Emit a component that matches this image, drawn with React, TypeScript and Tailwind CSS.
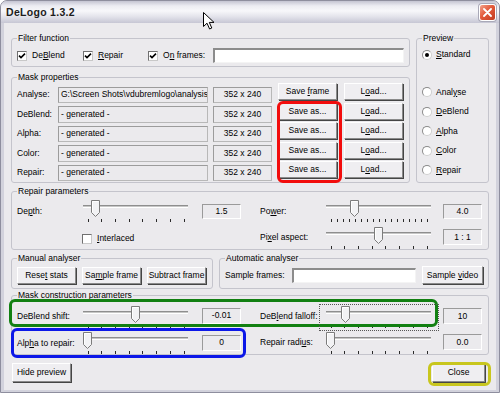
import React from 'react';

type Box = { children?: React.ReactNode; className?: string };

const U = ({ children }: { children: React.ReactNode }) => <span className="underline">{children}</span>;

function GroupBox({ title, className = '', children }: Box & { title: string }) {
  return (
    <fieldset className={['border border-[#c4c4cc] rounded-[3px] px-[5px] min-w-0 shrink-0', className].join(' ')}>
      <legend className="px-[1px] leading-[11px]">{title}</legend>
      {children}
    </fieldset>
  );
}

function CheckBox({ checked }: { checked?: boolean }) {
  return (
    <span className="w-[10px] h-[10px] shrink-0 bg-white border border-t-[#707070] border-l-[#707070] border-r-[#c8c8c8] border-b-[#c8c8c8] flex items-center justify-center">
      {checked && (
        <svg width="8" height="8" viewBox="0 0 8 8">
          <path d="M1 3.6 L3 5.6 L7 1.6" stroke="#000" strokeWidth="1.6" fill="none" />
        </svg>
      )}
    </span>
  );
}

function Radio({ checked }: { checked?: boolean }) {
  return (
    <span className="w-[10px] h-[10px] shrink-0 rounded-full bg-white border border-[#8a8a8a] border-r-[#cfcfcf] border-b-[#cfcfcf] flex items-center justify-center">
      {checked && <span className="w-[4px] h-[4px] rounded-full bg-black" />}
    </span>
  );
}

function Btn({ children, className = '' }: Box) {
  return (
    <button
      type="button"
      className={[
        'shrink-0 flex items-center justify-center bg-[#efeef1] border border-t-white border-l-white',
        'border-r-[#8a8a8a] border-b-[#8a8a8a] shadow-[1px_1px_0_#454545] leading-[11px]',
        className,
      ].join(' ')}
    >
      {children}
    </button>
  );
}

function ValueBox({ children, className = '' }: Box) {
  return (
    <div
      className={[
        'shrink-0 flex items-center justify-center border border-t-[#9a9a9a] border-l-[#9a9a9a] border-r-white border-b-white',
        className,
      ].join(' ')}
    >
      {children}
    </div>
  );
}

function Sunken({ className = '' }: Box) {
  return (
    <div
      className={[
        'shrink-0 bg-white border-t-2 border-l-2 border-r border-b border-t-[#8c8c8c] border-l-[#8c8c8c] border-r-[#f4f4f4] border-b-[#f4f4f4]',
        className,
      ].join(' ')}
    />
  );
}

function Slider({ width, x0, x1, pos, ticks }: { width: number; x0: number; x1: number; pos: number; ticks: number }) {
  const a = x0 + 4.5;
  const b = x1 - 4.5;
  const cx = a + pos * (b - a);
  const xs = Array.from({ length: ticks }, (_, i) => Math.round(a + (i * (b - a)) / (ticks - 1)) + 0.5);
  const l = Math.round(cx - 4.5);
  return (
    <svg width={width} height={23} className="shrink-0 block">
      <line x1={x0} x2={x1} y1={5.5} y2={5.5} stroke="#8e8e8e" />
      <line x1={x0} x2={x1} y1={6.5} y2={6.5} stroke="#c6c6c6" />
      <line x1={x0} x2={x1} y1={7.5} y2={7.5} stroke="#ffffff" />
      {xs.map((x, i) => (
        <line key={i} x1={x} x2={x} y1={19} y2={22} stroke="#2a2a2a" />
      ))}
      <path d={`M${l + 0.5} 12.5 V0.5 H${l + 8.5} V12.5 L${l + 4.5} 16.5 Z`} fill="#f2f2f4" stroke="#7c7c7c" />
      <path d={`M${l + 1.5} 12.2 V1.5 H${l + 7.5}`} stroke="#ffffff" fill="none" />
    </svg>
  );
}

const maskRows = [
  { label: 'Analyse:', path: 'G:\\Screen Shots\\vdubremlogo\\analysis', frame: true },
  { label: 'DeBlend:', path: '- generated -' },
  { label: 'Alpha:', path: '- generated -' },
  { label: 'Color:', path: '- generated -' },
  { label: 'Repair:', path: '- generated -' },
];

const previewRows: [string, string][] = [
  ['Anal', 'y', 'se'],
  ['', 'D', 'eBlend'],
  ['', 'A', 'lpha'],
  ['', 'C', 'olor'],
  ['', 'R', 'epair'],
] as unknown as [string, string][];

const greyBox = 'shrink-0 border border-[#b8b8b8] border-t-[#9c9c9c] border-l-[#9c9c9c] flex items-center overflow-hidden whitespace-nowrap';

export default function App() {
  return (
    <div className="relative w-[500px] h-[393px] flex flex-col overflow-hidden bg-[#d2d2dc] border border-[#8e8e9e] rounded-t-[7px] font-['Liberation_Sans',Arial,sans-serif] text-[8.5px] leading-[11px] text-black">
      {/* title bar */}
      <div className="h-[22px] shrink-0 flex items-center justify-between pl-[5px] pr-[3px] bg-[linear-gradient(to_bottom,#c4c4d2_0%,#ececf2_22%,#f7f7fa_45%,#e2e2ea_72%,#c6c6d4_100%)]">
        <span className="font-bold text-[10.5px] text-[#1c1c1c] tracking-[0.3px]">DeLogo 1.3.2</span>
        <div className="w-[17px] h-[17px] rounded-[3px] border border-white bg-[linear-gradient(135deg,#f3a28b_0%,#e35a3b_45%,#c23c21_100%)] shadow-[0_0_0_1px_#a9a9b8] flex items-center justify-center">
          <svg width="9" height="9" viewBox="0 0 9 9">
            <path d="M1 1 L8 8 M8 1 L1 8" stroke="#fff" strokeWidth="1.8" strokeLinecap="round" />
          </svg>
        </div>
      </div>

      {/* dialog body */}
      <div className="flex-1 mx-[3px] mb-[2px] bg-[#ebeaed] pt-[10px] px-[7px] pb-[8px] flex flex-col">
        <div className="flex gap-[6px] h-[150px] shrink-0">
          <div className="w-[399px] flex flex-col gap-[5px]">
            <GroupBox title="Filter function" className="h-[34px]">
              <div className="mt-[4px] h-[15px] flex items-center">
                <div className="w-[66px] flex items-center gap-[5px]">
                  <CheckBox checked />
                  <span>
                    De<U>B</U>lend
                  </span>
                </div>
                <div className="w-[65px] flex items-center gap-[5px]">
                  <CheckBox checked />
                  <span>
                    <U>R</U>epair
                  </span>
                </div>
                <div className="w-[65px] flex items-center gap-[5px]">
                  <CheckBox checked />
                  <span>
                    O<U>n</U> frames:
                  </span>
                </div>
                <Sunken className="w-[191px] h-[15px]" />
              </div>
            </GroupBox>

            <GroupBox title="Mask properties" className="h-[111px]">
              {maskRows.map((r) => (
                <div key={r.label} className="h-[19.5px] flex items-start">
                  <span className="w-[41px] shrink-0 mt-[3.5px] h-[16.5px] flex items-center">{r.label}</span>
                  <div className={`${greyBox} mt-[3.5px] w-[150px] h-[16.5px] pl-[2px]`}>{r.path}</div>
                  <div className={`${greyBox} mt-[3.5px] ml-[5px] w-[59px] h-[16.5px] justify-center`}>352 x 240</div>
                  <Btn className="ml-[6px] w-[59px] h-[17px]">
                    {r.frame ? (
                      <span>
                        Save <U>f</U>rame
                      </span>
                    ) : (
                      'Save as...'
                    )}
                  </Btn>
                  <Btn className="ml-[7px] w-[59px] h-[17px]">
                    <span>
                      L<U>o</U>ad...
                    </span>
                  </Btn>
                </div>
              ))}
            </GroupBox>
          </div>

          <GroupBox title="Preview" className="w-[73px] h-[150px]">
            <div className="mt-[1px] h-[19.5px] flex items-center gap-[4px]">
              <Radio checked />
              <span>
                <U>S</U>tandard
              </span>
            </div>
            <div className="mt-[18px] flex flex-col">
              {(previewRows as unknown as string[][]).map(([pre, key, post]) => (
                <div key={key} className="h-[19.5px] flex items-center gap-[4px]">
                  <Radio />
                  <span>
                    {pre}
                    <U>{key}</U>
                    {post}
                  </span>
                </div>
              ))}
            </div>
          </GroupBox>
        </div>

        <GroupBox title="Repair parameters" className="mt-[3px] h-[64px]">
          <div className="pt-[3px]">
            <div className="h-[27px] flex items-start">
              <span className="w-[65px] shrink-0 mt-[6px]">
                De<U>p</U>th:
              </span>
              <Slider width={112} x0={1} x1={106} pos={0.08} ticks={8} />
              <ValueBox className="ml-[8px] mt-[4px] w-[39px] h-[15px]">1.5</ValueBox>
              <span className="ml-[19px] w-[62px] shrink-0 mt-[6px]">
                Po<U>w</U>er:
              </span>
              <Slider width={114} x0={4} x1={109} pos={0.25} ticks={17} />
              <ValueBox className="ml-[7px] mt-[4px] w-[39px] h-[15px]">4.0</ValueBox>
            </div>
            <div className="flex items-start">
              <div className="w-[65px] shrink-0" />
              <div className="w-[112px] shrink-0 mt-[6px] flex items-center gap-[5px]">
                <CheckBox />
                <span>
                  <U>I</U>nterlaced
                </span>
              </div>
              <div className="ml-[8px] w-[39px] shrink-0" />
              <span className="ml-[19px] w-[62px] shrink-0 mt-[5px]">
                Pi<U>x</U>el aspect:
              </span>
              <Slider width={114} x0={4} x1={109} pos={0.5} ticks={8} />
              <ValueBox className="ml-[7px] mt-[2px] w-[39px] h-[16px]">1 : 1</ValueBox>
            </div>
          </div>
        </GroupBox>

        <div className="mt-[3px] flex gap-[6px] h-[36px] shrink-0">
          <GroupBox title="Manual analyser" className="w-[202px] h-[36px]">
            <div className="pt-[2.5px] flex gap-[6px]">
              <Btn className="w-[59px] h-[17px]">
                <span>
                  Rese<U>t</U> stats
                </span>
              </Btn>
              <Btn className="w-[59px] h-[17px]">
                <span>
                  Sa<U>m</U>ple frame
                </span>
              </Btn>
              <Btn className="w-[59px] h-[17px]">Subtract frame</Btn>
            </div>
          </GroupBox>
          <GroupBox title="Automatic analyser" className="flex-1 h-[36px]">
            <div className="pt-[2px] h-[20px] flex items-center">
              <span className="w-[67px] shrink-0">Sample frames:</span>
              <Sunken className="w-[124px] h-[15px]" />
              <Btn className="ml-[6px] w-[61px] h-[17.5px]">
                <span>
                  Sample <U>v</U>ideo
                </span>
              </Btn>
            </div>
          </GroupBox>
        </div>

        <GroupBox title="Mask construction parameters" className="mt-[1px] h-[65px]">
          <div className="pt-[5px]">
            <div className="h-[26px] flex items-start">
              <span className="w-[65px] shrink-0 mt-[5px]">DeBlend shift:</span>
              <Slider width={112} x0={1} x1={106} pos={0.5} ticks={8} />
              <ValueBox className="ml-[8px] mt-[2px] w-[39px] h-[15.5px]">-0.01</ValueBox>
              <span className="ml-[19px] w-[62px] shrink-0 mt-[5px]">
                DeB<U>l</U>end falloff:
              </span>
              <Slider width={114} x0={4} x1={109} pos={0.16} ticks={8} />
              <ValueBox className="ml-[7px] mt-[2px] w-[39px] h-[16px]">10</ValueBox>
            </div>
            <div className="flex items-start">
              <span className="w-[65px] shrink-0 mt-[6px]">
                Alp<U>h</U>a to repair:
              </span>
              <Slider width={112} x0={1} x1={106} pos={0} ticks={8} />
              <ValueBox className="ml-[8px] mt-[3px] w-[39px] h-[15.5px]">0</ValueBox>
              <span className="ml-[19px] w-[62px] shrink-0 mt-[5px]">
                Repair radi<U>u</U>s:
              </span>
              <Slider width={114} x0={4} x1={109} pos={0} ticks={8} />
              <ValueBox className="ml-[7px] mt-[2px] w-[39px] h-[16px]">0.0</ValueBox>
            </div>
          </div>
        </GroupBox>

        <div className="mt-[8px] h-[19px] shrink-0 flex justify-between">
          <Btn className="ml-[1px] w-[59px] h-[19px]">Hide preview</Btn>
          <Btn className="mr-[4px] w-[53px] h-[19px]">Close</Btn>
        </div>
      </div>

      {/* annotation marks drawn over the dialog */}
      <div className="absolute left-[276px] top-[100px] w-[65px] h-[82px] border-[3px] border-[#f20c0c] rounded-[6px] pointer-events-none" />
      <div className="absolute left-[8px] top-[298px] w-[429px] h-[28px] border-[3px] border-[#128012] rounded-[6px] pointer-events-none" />
      <div className="absolute left-[10px] top-[327px] w-[235px] h-[30px] border-[3px] border-[#0c18e8] rounded-[6px] pointer-events-none" />
      <div className="absolute left-[427px] top-[361px] w-[63px] h-[24px] border-[3px] border-[#c8c61e] rounded-[6px] pointer-events-none" />
      <div className="absolute left-[318px] top-[303px] w-[120px] h-[27px] border border-dotted border-[#555] pointer-events-none" />

      {/* mouse pointer */}
      <svg className="absolute left-[202px] top-[11px] pointer-events-none" width="13" height="18" viewBox="0 0 13 18">
        <path d="M0.5 0.5 V14.5 L4 11.2 L6.6 17 L8.8 16 L6.3 10.4 H11 Z" fill="#fff" stroke="#000" strokeLinejoin="round" />
      </svg>
    </div>
  );
}
